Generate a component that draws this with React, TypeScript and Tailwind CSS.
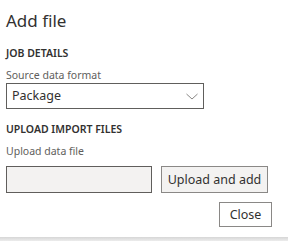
import React from "react";

export default function App() {
  return (
    <div className="w-[288px] h-[241px] bg-white flex flex-col overflow-hidden" style={{ fontFamily: '"Noto Sans", "Open Sans", sans-serif' }}>
      <div className="flex-1 flex flex-col pl-[6px] pr-[16px] text-[#323130]">
        <div className="mt-[9px] h-[24px] text-[17px] leading-[24px]">Add file</div>
        <div className="mt-[12px] h-[16px] text-[10.5px] leading-[16px] font-semibold">JOB DETAILS</div>
        <div className="mt-[6px] h-[16px] text-[10.5px] leading-[16px] text-[#605e5c]">Source data format</div>
        <div className="mt-[0px] w-[198px] h-[26px] border border-[#605e5c] flex items-center justify-between pl-[5px] pr-[4px]">
          <span className="text-[12.5px] leading-[18px]">Package</span>
          <svg width="14" height="14" viewBox="0 0 14 14" fill="none">
            <path d="M1.5 5 L7 10 L12.5 5" stroke="#8a8886" strokeWidth="1" />
          </svg>
        </div>
        <div className="mt-[12px] h-[16px] text-[10.5px] leading-[16px] font-semibold">UPLOAD IMPORT FILES</div>
        <div className="mt-[6px] h-[16px] text-[10.5px] leading-[16px] text-[#605e5c]">Upload data file</div>
        <div className="mt-[7px] flex gap-[9px]">
          <div className="w-[146px] h-[27px] bg-[#f3f2f1] border border-[#605e5c]" />
          <button className="w-[107px] h-[27px] bg-[#f3f2f1] border border-[#8a8886] text-[12.5px] leading-[18px] text-[#323130]">Upload and add</button>
        </div>
        <div className="mt-[9px] flex justify-end">
          <button className="w-[53px] h-[25px] bg-white border border-[#8a8886] text-[12.5px] leading-[18px] text-[#323130]">Close</button>
        </div>
      </div>
      <div className="h-[4px] bg-gradient-to-b from-[#d6d6d6] to-[#ececec]" />
    </div>
  );
}
